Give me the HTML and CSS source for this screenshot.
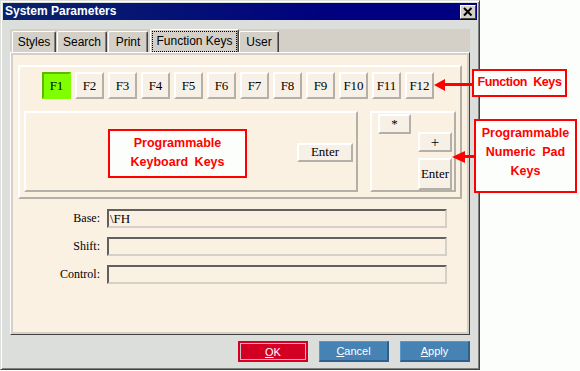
FILE: index.html
```html
<!DOCTYPE html>
<html lang="en">
<head>
  <meta charset="UTF-8">
  <title>System Parameters</title>
  <link rel="stylesheet" href="styles.css">
</head>
<body>

  <!-- Dialog window -->
  <div class="dialog">
    <div class="titlebar">
      <span class="title">System Parameters</span>
      <div class="close">
        <svg width="16" height="14" viewBox="0 0 16 14">
          <path d="M4 3 L11.5 10.5 M11.5 3 L4 10.5" stroke="#000" stroke-width="2" fill="none"/>
        </svg>
      </div>
    </div>

    <div class="tabctl">
      <div class="tabstrip">
        <div class="tab tab-styles">Styles</div>
        <div class="tab tab-search">Search</div>
        <div class="tab tab-print">Print</div>
        <div class="tab selected"><span class="focus">Function Keys</span></div>
        <div class="tab tab-user">User</div>
      </div>

      <div class="panel">
        <div class="keygroup">
          <div class="fkeys">
            <div class="key fkey active">F1</div>
            <div class="key fkey">F2</div>
            <div class="key fkey">F3</div>
            <div class="key fkey">F4</div>
            <div class="key fkey">F5</div>
            <div class="key fkey">F6</div>
            <div class="key fkey">F7</div>
            <div class="key fkey">F8</div>
            <div class="key fkey">F9</div>
            <div class="key fkey">F10</div>
            <div class="key fkey">F11</div>
            <div class="key fkey">F12</div>
          </div>

          <div class="boxes">
            <div class="kbbox">
              <div class="callout callout-kb">Programmable<br>Keyboard Keys</div>
              <div class="key enter">Enter</div>
            </div>
            <div class="numbox">
              <div class="key star">*</div>
              <div class="numcol">
                <div class="key plus">+</div>
                <div class="key numenter">Enter</div>
              </div>
            </div>
          </div>
        </div>

        <div class="fields">
          <label>Base:</label>
          <div class="field">\FH</div>
          <label>Shift:</label>
          <div class="field"></div>
          <label>Control:</label>
          <div class="field"></div>
        </div>
      </div>
    </div>

    <div class="buttons">
      <div class="btn btn-ok"><u>O</u>K</div>
      <div class="btn"><u>C</u>ancel</div>
      <div class="btn"><u>A</u>pply</div>
    </div>
  </div>

  <!-- Annotations -->
  <svg class="arrow arrow-fk" width="40" height="14" viewBox="0 0 40 14">
    <polygon points="0,7 11,1 11,13" fill="#f00"/>
    <rect x="10" y="5" width="30" height="3" fill="#f00"/>
  </svg>
  <div class="callout callout-fk">Function Keys</div>

  <svg class="arrow arrow-np" width="24" height="12" viewBox="0 0 24 12">
    <polygon points="0,6 13,0 13,12" fill="#f00"/>
    <rect x="12" y="4" width="12" height="3" fill="#f00"/>
  </svg>
  <div class="callout callout-np">Programmable<br>Numeric Pad<br>Keys</div>

</body>
</html>
```

FILE: styles.css
```css
* {
  box-sizing: border-box;
}

body {
  margin: 0;
  background: #fcfefc;
  position: relative;
  font-family: 'Liberation Sans', Arial, sans-serif;
}

.dialog {
  width: 480px;
  height: 370px;
  padding: 2px;
  background: #dcdedb;
  border: 1px solid;
  border-color: #dcdedb #404040 #404040 #dcdedb;
  box-shadow: inset 1px 1px 0 #fff, inset -1px -1px 0 #808080;
}

/* Title bar */
.titlebar {
  height: 17px;
  display: flex;
  align-items: flex-start;
  justify-content: space-between;
  background: linear-gradient(to right, #0a246a, #000080 70%);
  padding: 0 1px 0 2px;
}

.title {
  color: #fff;
  font-weight: bold;
  font-size: 12px;
  line-height: 17px;
}

.close {
  width: 16px;
  height: 14px;
  margin-top: 2px;
  background: #d4d0c8;
  border: 1px solid;
  border-color: #fff #404040 #404040 #fff;
  position: relative;
}

.close svg {
  position: absolute;
  left: -1px;
  top: -1px;
}

/* Tab control */
.tabctl {
  width: 460px;
  margin: 9px 0 0 7px;
}

.tabstrip {
  height: 23px;
  background: #d4d0c8;
  display: flex;
  align-items: flex-end;
  padding-left: 2px;
}

.tab {
  height: 21px;
  margin-right: 1px;
  font-size: 12px;
  line-height: 20px;
  text-align: center;
  color: #000;
  background: #d4d0c8;
  border: 1px solid;
  border-bottom: none;
  border-color: #fff #404040 #404040 #fff;
  border-radius: 2px 2px 0 0;
  box-shadow: inset -1px 0 0 #808080;
}

.tab-styles {
  width: 44px;
}

.tab-search {
  width: 50px;
}

.tab-print {
  width: 40px;
}

.tab-user {
  width: 40px;
}

.tab.selected {
  width: 89px;
  height: 23px;
  margin: 0 0 0 1px;
  padding: 1px 1px 0 1px;
  line-height: 18px;
}

.tab.selected .focus {
  display: block;
  height: 21px;
  border: 1px dotted #000;
}

.panel {
  height: 283px;
  background: #faf1e3;
  border: 1px solid;
  border-color: #fff #404040 #404040 #fff;
  box-shadow: inset 2px 2px 0 #d4d0c8, inset -2px -2px 0 #d4d0c8;
  padding: 12px 0 0 7px;
}

/* Keys group */
.keygroup {
  width: 444px;
  height: 134px;
  border: 2px solid;
  border-color: #fff #b4b0a8 #b4b0a8 #fff;
  padding: 5px 0 0 4px;
}

.fkeys {
  display: flex;
  gap: 4px;
  padding-left: 18px;
}

.key {
  display: flex;
  align-items: center;
  justify-content: center;
  background: #f7f0e6;
  border: 2px solid;
  border-color: #fff #b4b0a8 #b4b0a8 #fff;
  font-family: 'Liberation Serif', 'Times New Roman', serif;
  font-size: 13px;
  color: #000;
}

.fkey {
  width: 29px;
  height: 27px;
}

.fkey.active {
  background: #80ff00;
  border-color: #5cb800 #80ff00 #80ff00 #5cb800;
}

.boxes {
  display: flex;
  gap: 12px;
  margin-top: 12px;
}

.kbbox {
  position: relative;
  width: 334px;
  height: 81px;
  border: 2px solid;
  border-color: #fff #b4b0a8 #b4b0a8 #fff;
  display: flex;
  align-items: center;
  justify-content: flex-end;
  padding: 1px 3px 0 0;
}

.enter {
  width: 56px;
  height: 19px;
}

.numbox {
  width: 86px;
  height: 81px;
  border: 2px solid;
  border-color: #fff #b4b0a8 #b4b0a8 #fff;
  display: flex;
  align-items: flex-start;
  padding: 1px 0 0 6px;
}

.star {
  width: 33px;
  height: 20px;
}

.numcol {
  margin: 18px 0 0 7px;
  display: flex;
  flex-direction: column;
  gap: 6px;
}

.plus {
  width: 34px;
  height: 20px;
  font-size: 15px;
}

.numenter {
  width: 34px;
  height: 32px;
}

/* Base / Shift / Control fields */
.fields {
  display: grid;
  grid-template-columns: 82px 340px;
  column-gap: 7px;
  row-gap: 9px;
  margin-top: 10px;
  align-items: center;
}

.fields label {
  text-align: right;
  font-family: 'Liberation Serif', 'Times New Roman', serif;
  font-size: 12px;
  color: #000;
}

.field {
  height: 19px;
  border: 2px solid;
  border-color: #606060 #d4d0c8 #d4d0c8 #606060;
  background: #faf1e3;
  font-family: 'Liberation Serif', 'Times New Roman', serif;
  font-size: 13px;
  line-height: 15px;
  padding-left: 1px;
}

/* Dialog buttons */
.buttons {
  width: 467px;
  display: flex;
  justify-content: flex-end;
  gap: 11px;
  margin-top: 6px;
}

.btn {
  width: 70px;
  height: 21px;
  display: flex;
  align-items: center;
  justify-content: center;
  background: #4682b4;
  border: solid;
  border-width: 1px 2px 2px 1px;
  border-color: #5b97c9 #2f5f8a #2f5f8a #5b97c9;
  color: #fff;
  font-size: 11px;
}

.btn-ok {
  background: #d40024;
  border: none;
  box-shadow: inset 0 0 0 2px #d40024, inset 0 0 0 3px #c4c4c4;
}

/* Red annotations */
.callout {
  position: absolute;
  background: #fcfefc;
  border: 2px solid #f00;
  color: #f00;
  font-family: 'Liberation Sans', Arial, sans-serif;
  font-weight: bold;
  font-size: 12.5px;
  line-height: 19px;
  text-align: center;
  white-space: nowrap;
  word-spacing: 3px;
}

.callout-kb {
  left: 82px;
  top: 16px;
  width: 139px;
  height: 49px;
  padding-top: 3px;
}

.callout-fk {
  left: 472px;
  top: 69px;
  width: 95px;
  height: 28px;
  padding-top: 2px;
  letter-spacing: -0.4px;
}

.callout-np {
  left: 474px;
  top: 119px;
  width: 103px;
  height: 74px;
  padding-top: 3px;
}

.arrow {
  position: absolute;
}

.arrow-fk {
  left: 434px;
  top: 78px;
}

.arrow-np {
  left: 452px;
  top: 151px;
}
```
